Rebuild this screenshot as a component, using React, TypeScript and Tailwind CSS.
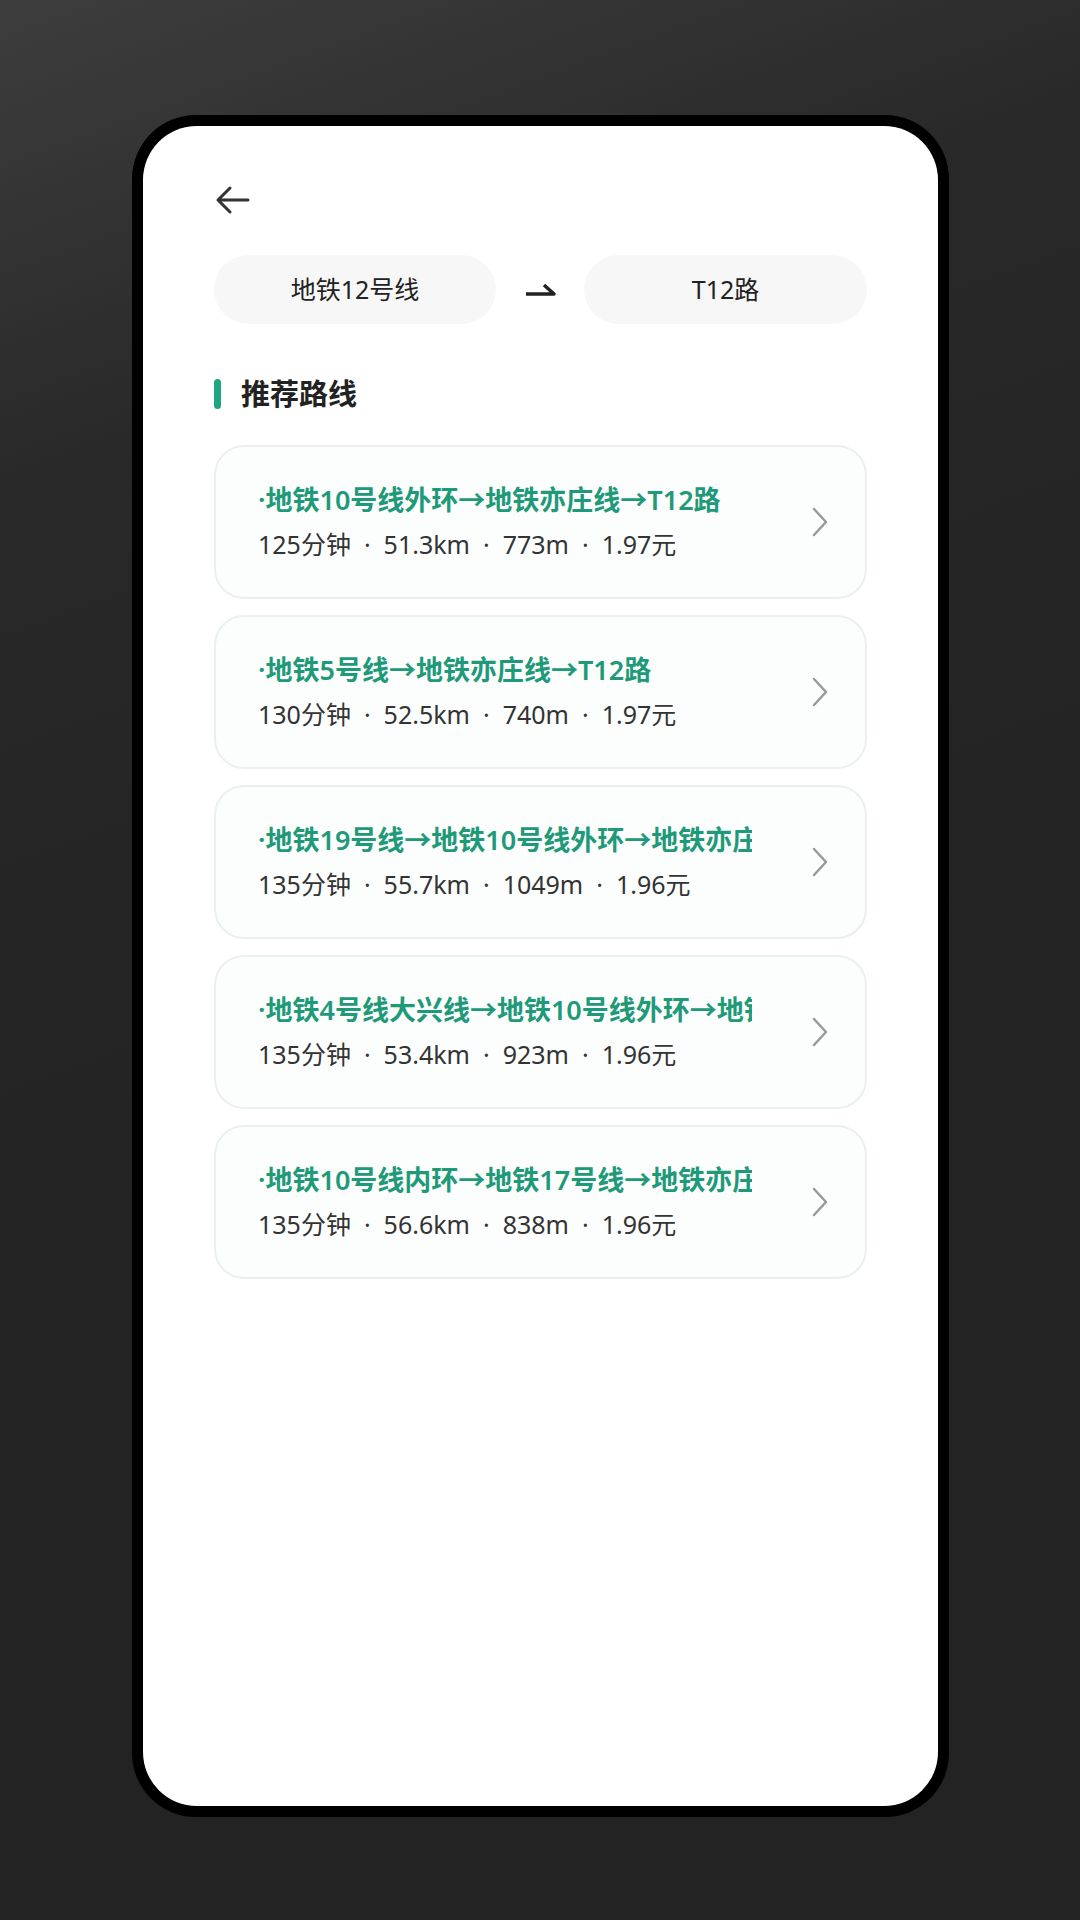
type Route = {
  path: string;
  info: string[];
};

const routes: Route[] = [
  { path: "·地铁10号线外环→地铁亦庄线→T12路", info: ["125分钟", "51.3km", "773m", "1.97元"] },
  { path: "·地铁5号线→地铁亦庄线→T12路", info: ["130分钟", "52.5km", "740m", "1.97元"] },
  { path: "·地铁19号线→地铁10号线外环→地铁亦庄线→T12路", info: ["135分钟", "55.7km", "1049m", "1.96元"] },
  { path: "·地铁4号线大兴线→地铁10号线外环→地铁亦庄线→T12路", info: ["135分钟", "53.4km", "923m", "1.96元"] },
  { path: "·地铁10号线内环→地铁17号线→地铁亦庄线→T12路", info: ["135分钟", "56.6km", "838m", "1.96元"] },
];

function BackArrow() {
  return (
    <svg width="36" height="30" viewBox="0 0 36 30" fill="none">
      <path d="M34 15H4M16 3L4 15L16 27" stroke="#333" strokeWidth="3" strokeLinecap="round" strokeLinejoin="round" />
    </svg>
  );
}

function Harpoon() {
  return (
    <svg width="32" height="14" viewBox="0 0 32 14" fill="none">
      <path d="M2 11H30L20 2" stroke="#222" strokeWidth="3.5" strokeLinejoin="round" />
    </svg>
  );
}

function Chevron() {
  return (
    <svg width="18" height="30" viewBox="0 0 18 30" fill="none">
      <path d="M3 2L15 15L3 28" stroke="#999" strokeWidth="2.5" strokeLinecap="round" strokeLinejoin="round" />
    </svg>
  );
}

function RouteCard({ route }: { route: Route }) {
  return (
    <div className="h-[154px] rounded-[30px] border-2 border-[#eceff0] bg-[#fcfdfd] pl-[42px] pr-[36px] flex items-center justify-between">
      <div className="flex flex-col gap-[4px]">
        <div className="w-[494px] overflow-hidden whitespace-nowrap text-[27px] leading-[40px] font-semibold text-[#1f9a78]">
          {route.path}
        </div>
        <div className="flex items-center text-[25px] leading-[40px] text-[#333]">
          {route.info.map((item, i) => (
            <span key={i} className="flex items-center">
              {i > 0 && <span className="px-[13px]">·</span>}
              {item}
            </span>
          ))}
        </div>
      </div>
      <Chevron />
    </div>
  );
}

export default function App() {
  return (
    <div className="w-[1080px] h-[1920px] bg-[linear-gradient(160deg,#3d3d3d_0%,#282828_22%,#232323_55%)] pt-[115px] pl-[132px] font-['Noto_Sans','Noto_Sans_CJK_SC',sans-serif]">
      <div className="w-[817px] h-[1702px] bg-black p-[11px] rounded-[64px]">
        <div className="h-full bg-white rounded-[54px] px-[71px] pt-[59px]">
          <div className="h-[30px] flex items-center">
            <BackArrow />
          </div>

          <div className="mt-[40px] flex items-center justify-between">
            <div className="w-[282px] h-[69px] rounded-full bg-[#f7f7f7] flex items-center justify-center text-[25px] text-[#222]">
              地铁12号线
            </div>
            <Harpoon />
            <div className="w-[283px] h-[69px] rounded-full bg-[#f7f7f7] flex items-center justify-center text-[25px] text-[#222]">
              T12路
            </div>
          </div>

          <div className="mt-[55px] h-[30px] flex items-center gap-[20px]">
            <div className="w-[7px] h-[30px] rounded-full bg-[#1fa57f]"></div>
            <h2 className="text-[29px] font-bold text-[#222]">推荐路线</h2>
          </div>

          <div className="mt-[36px] flex flex-col gap-[16px]">
            {routes.map((route, index) => (
              <RouteCard key={index} route={route} />
            ))}
          </div>
        </div>
      </div>
    </div>
  );
}
